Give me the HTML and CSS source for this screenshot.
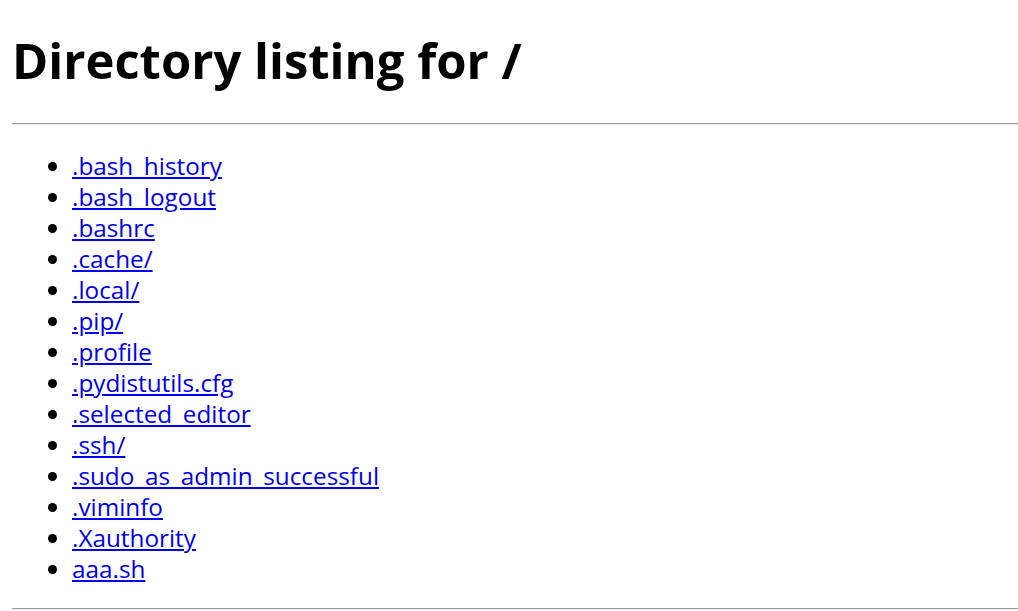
FILE: index.html
```html
<!DOCTYPE html>
<html>
<head>
<meta charset="utf-8">
<title>Directory listing for /</title>
<link rel="stylesheet" href="styles.css">
</head>
<body>
<h1 class="title">Directory listing for /</h1>
<hr class="rule">
<ul class="listing">
<li><a href="#">.bash_history</a></li>
<li><a href="#">.bash_logout</a></li>
<li><a href="#">.bashrc</a></li>
<li><a href="#">.cache/</a></li>
<li><a href="#">.local/</a></li>
<li><a href="#">.pip/</a></li>
<li><a href="#">.profile</a></li>
<li><a href="#">.pydistutils.cfg</a></li>
<li><a href="#">.selected_editor</a></li>
<li><a href="#">.ssh/</a></li>
<li><a href="#">.sudo_as_admin_successful</a></li>
<li><a href="#">.viminfo</a></li>
<li><a href="#">.Xauthority</a></li>
<li><a href="#">aaa.sh</a></li>
</ul>
<hr class="rule">
</body>
</html>
```
FILE: styles.css
```css
html, body {
  margin: 0;
  padding: 0;
  background: #fff;
}
body {
  padding: 0 0 0 12px;
  font-family: "Open Sans", "Noto Sans", sans-serif;
  color: #000;
}
.title {
  margin: 0 0 28px 0;
  padding-top: 28px;
  height: 67px;
  box-sizing: border-box;
  height: 95px;
  font-size: 49px;
  line-height: 64px;
  font-weight: bold;
}
.rule {
  margin: 0;
  border: 0;
  border-top: 1px solid #9a9a9a;
  border-bottom: 1px solid #eeeeee;
  height: 0;
}
.listing {
  margin: 0;
  padding: 25px 0 24px 60px;
  font-size: 24.3px;
  line-height: 31px;
}
.listing a {
  color: #0000ee;
}
```
